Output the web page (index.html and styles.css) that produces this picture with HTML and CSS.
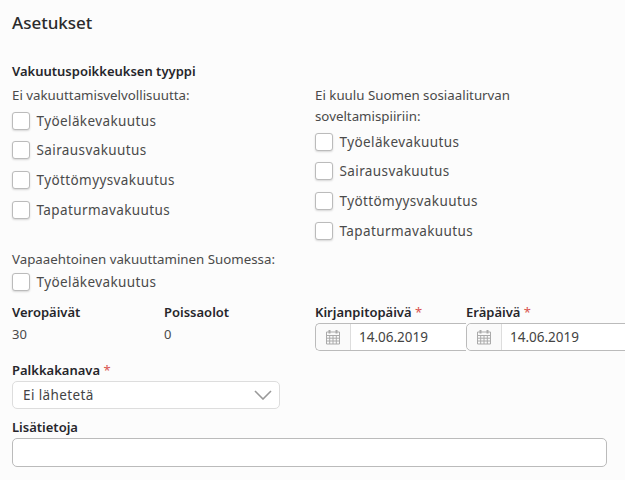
FILE: index.html
```html
<!DOCTYPE html>
<html lang="en">
<head>
    <meta charset="UTF-8">
    <title>Asetukset</title>
    <link rel="stylesheet" href="styles.css">
</head>
<body>
    <h1>Asetukset</h1>
    <div class="field-title">Vakuutuspoikkeuksen tyyppi</div>
    <div class="columns">
        <div class="col">
            <div class="group-title">Ei vakuuttamisvelvollisuutta:</div>
            <label class="check"><span class="box"></span>Työeläkevakuutus</label>
            <label class="check"><span class="box"></span>Sairausvakuutus</label>
            <label class="check"><span class="box"></span>Työttömyysvakuutus</label>
            <label class="check"><span class="box"></span>Tapaturmavakuutus</label>
        </div>
        <div class="col">
            <div class="group-title">Ei kuulu Suomen sosiaaliturvan<br>soveltamispiiriin:</div>
            <label class="check"><span class="box"></span>Työeläkevakuutus</label>
            <label class="check"><span class="box"></span>Sairausvakuutus</label>
            <label class="check"><span class="box"></span>Työttömyysvakuutus</label>
            <label class="check"><span class="box"></span>Tapaturmavakuutus</label>
        </div>
    </div>
    <div class="voluntary">
        <div class="group-title">Vapaaehtoinen vakuuttaminen Suomessa:</div>
        <label class="check"><span class="box"></span>Työeläkevakuutus</label>
    </div>
    <div class="info-row">
        <div class="info">
            <div class="field-title">Veropäivät</div>
            <div class="value">30</div>
        </div>
        <div class="info info-wide">
            <div class="field-title">Poissaolot</div>
            <div class="value">0</div>
        </div>
        <div class="date-field date-first">
            <div class="field-title">Kirjanpitopäivä <span class="req">*</span></div>
            <div class="date-input">
                <span class="date-icon">
                    <svg width="16" height="16" viewBox="0 0 16 16"><path d="M1.5 3h13v12h-13zM1.5 6.5h13M1.5 9.2h13M1.5 12h13M4.7 6.5V15M8 6.5V15M11.3 6.5V15" fill="none" stroke="#aaa"/><path d="M3.5 1h2v3.5h-2zM10.5 1h2v3.5h-2z" fill="#aaa"/></svg>
                </span>
                <span class="date-value">14.06.2019</span>
            </div>
        </div>
        <div class="date-field date-last">
            <div class="field-title">Eräpäivä <span class="req">*</span></div>
            <div class="date-input">
                <span class="date-icon">
                    <svg width="16" height="16" viewBox="0 0 16 16"><path d="M1.5 3h13v12h-13zM1.5 6.5h13M1.5 9.2h13M1.5 12h13M4.7 6.5V15M8 6.5V15M11.3 6.5V15" fill="none" stroke="#aaa"/><path d="M3.5 1h2v3.5h-2zM10.5 1h2v3.5h-2z" fill="#aaa"/></svg>
                </span>
                <span class="date-value">14.06.2019</span>
            </div>
        </div>
    </div>
    <div class="field-title channel-title">Palkkakanava <span class="req">*</span></div>
    <div class="select">
        <span>Ei lähetetä</span>
        <svg width="18" height="10" viewBox="0 0 18 10"><path d="M1 1l8 8 8-8" fill="none" stroke="#999" stroke-width="1.6"/></svg>
    </div>
    <div class="field-title extra-title">Lisätietoja</div>
    <div class="text-input"></div>
</body>
</html>
```

FILE: styles.css
```css
html, body {
    overflow: hidden;
}

body {
    font-family: "Noto Sans", sans-serif;
    font-size: 13px;
    background-color: #fcfcfc;
    color: #333;
    margin: 0;
    padding: 0 12px;
    width: 601px;
    height: 480px;
}

h1 {
    font-size: 17px;
    font-weight: 500;
    line-height: 24px;
    color: #2b2b2b;
    margin: 0;
    padding-top: 11px;
    margin-bottom: 26px;
}

.field-title {
    font-size: 13px;
    font-weight: 600;
    line-height: 20px;
    color: #26262b;
    white-space: nowrap;
}

.columns {
    display: flex;
    margin-top: 4px;
}

.col {
    flex: none;
    width: 303px;
}

.group-title {
    font-size: 13.3px;
    line-height: 21px;
    color: #4a4a4a;
    white-space: nowrap;
}

.check {
    display: flex;
    align-items: center;
    height: 29.6px;
    font-size: 13.5px;
    color: #4a4a4a;
    letter-spacing: 0.4px;
}

.box {
    flex: none;
    width: 16px;
    height: 16px;
    margin-right: 6.5px;
    border: 1px solid #bbb;
    border-radius: 3px;
    background-color: #fff;
    box-shadow: 0 1px 2px rgba(0, 0, 0, 0.15);
}

.voluntary {
    margin-top: 4px;
}

.voluntary .check {
    height: 24px;
}

.info-row {
    display: flex;
    margin-top: 8px;
}

.info {
    flex: none;
    width: 152px;
}

.info-wide {
    width: 151px;
}

.value {
    font-size: 13px;
    line-height: 24px;
    color: #4a4a4a;
}

.date-field {
    flex: none;
    width: 151px;
}

.date-first .date-input {
    border-right: none;
}

.date-last {
    width: 175px;
}

.req {
    color: #d9534f;
    font-weight: 400;
}

.date-input {
    display: flex;
    align-items: center;
    height: 26px;
    border: 1px solid #bbb;
    border-radius: 5px 0 0 5px;
    background-color: #fff;
    margin-top: 1px;
}

.date-icon {
    display: flex;
    justify-content: center;
    align-items: center;
    width: 34px;
    height: 26px;
    border-right: 1px solid #ddd;
    background-color: #fafafa;
    border-radius: 5px 0 0 5px;
}

.date-value {
    padding-left: 8px;
    font-size: 13.5px;
    color: #444;
}

.channel-title {
    margin-top: 9px;
}

.select {
    display: flex;
    justify-content: space-between;
    align-items: center;
    box-sizing: border-box;
    width: 268px;
    height: 28px;
    margin-top: 1px;
    padding: 0 7px 0 10px;
    border: 1px solid #ddd;
    border-radius: 5px;
    background-color: #fff;
    font-size: 13.5px;
    letter-spacing: 0.4px;
    color: #444;
}

.extra-title {
    margin-top: 8px;
}

.text-input {
    box-sizing: border-box;
    width: 595px;
    height: 29px;
    margin-top: 1px;
    border: 1px solid #bbb;
    border-radius: 5px;
    background-color: #fff;
}
```
